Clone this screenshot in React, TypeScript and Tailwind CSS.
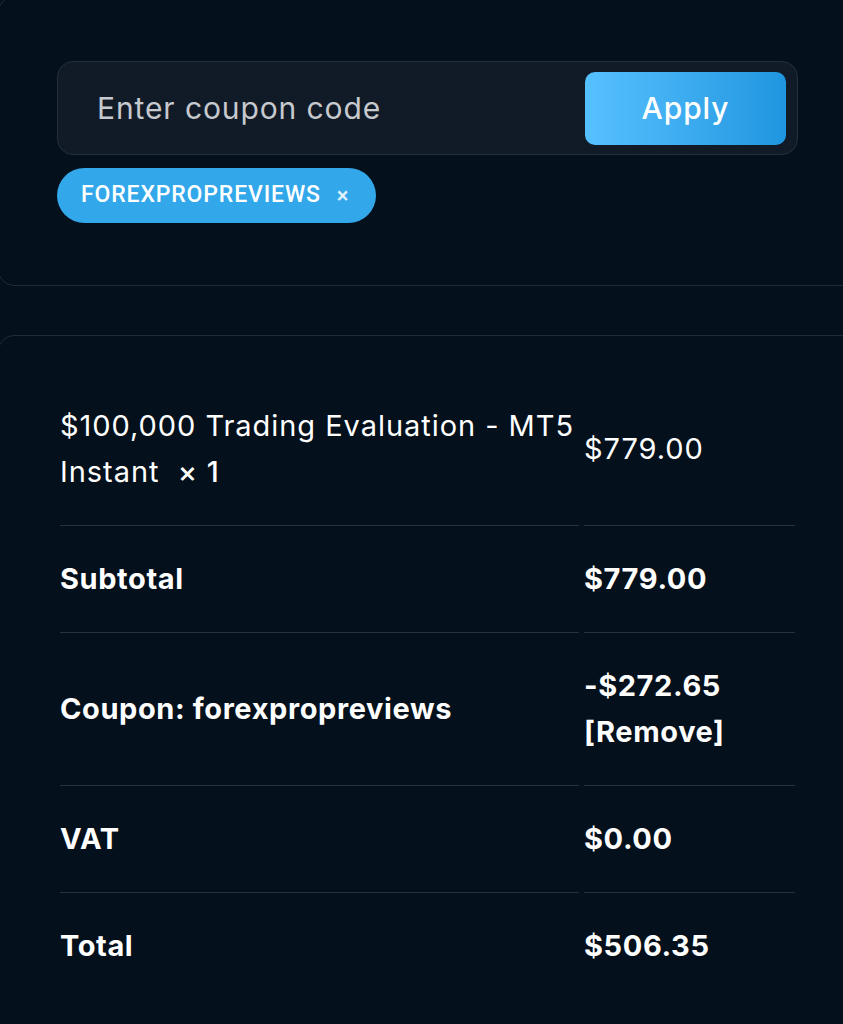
import React from 'react';

type Row = {
  label: React.ReactNode;
  value: React.ReactNode;
  bold?: boolean;
};

const rows: Row[] = [
  {
    label: (
      <>
        $100,000 Trading Evaluation - MT5 Instant&nbsp;&nbsp;<strong className="font-medium">×&nbsp;1</strong>
      </>
    ),
    value: '$779.00',
  },
  { label: 'Subtotal', value: '$779.00', bold: true },
  {
    label: 'Coupon: forexpropreviews',
    value: (
      <>
        -$272.65
        <br />
        <a href="#" className="text-white">[Remove]</a>
      </>
    ),
    bold: true,
  },
  { label: 'VAT', value: '$0.00', bold: true },
  { label: 'Total', value: '$506.35', bold: true },
];

function CouponCard() {
  return (
    <div className="rounded-[16px] border border-[#202b38] pl-[58px] pt-[64px] pb-[62px]">
      <div className="flex h-[94px] w-[741px] items-center justify-between rounded-[16px] border border-[#252f3b] bg-[#111b27] pl-[39px] pr-[11px]">
        <input
          type="text"
          placeholder="Enter coupon code"
          className="w-[440px] bg-transparent text-[30px] tracking-[0.9px] text-white outline-none placeholder:text-[#c6c9cd]"
        />
        <button className="h-[73px] w-[201px] rounded-[10px] bg-gradient-to-r from-[#56c1ff] to-[#1e96e0] text-[30px] font-medium tracking-[0.9px] text-white">
          Apply
        </button>
      </div>
      <div className="mt-[13px] flex">
        <span className="flex h-[55px] items-center gap-[16px] rounded-full bg-[#32a7ea] pl-[24px] pr-[27px] font-['Roboto',sans-serif] text-[23px] font-medium tracking-[0.85px] text-white">
          FOREXPROPREVIEWS
          <span className="text-[22px] text-white/85">×</span>
        </span>
      </div>
    </div>
  );
}

function TotalsCard() {
  return (
    <div className="mt-[49px] rounded-[16px] border border-[#202b38] pl-[61px] pt-[37px] pb-[40px]">
      <div className="grid grid-cols-[519px_211px] gap-x-[5px] text-[29px] leading-[46px] tracking-[0.95px] text-white">
        {rows.map((row, i) => {
          const last = i === rows.length - 1;
          const line = last ? '' : 'border-b border-[#28323f]';
          const weight = row.bold ? 'font-bold tracking-[0.6px]' : '';
          return (
            <React.Fragment key={i}>
              <div className={`flex items-center py-[30px] ${line} ${weight}`}>
                <div>{row.label}</div>
              </div>
              <div className={`flex items-center py-[30px] ${line} ${weight}`}>
                <div>{row.value}</div>
              </div>
            </React.Fragment>
          );
        })}
      </div>
    </div>
  );
}

export default function App() {
  return (
    <div className="min-h-screen w-full overflow-hidden bg-[#04101b] font-['Inter',sans-serif] antialiased">
      <div className="-ml-[2px] -mt-[4px] w-[900px]">
        <CouponCard />
        <TotalsCard />
      </div>
    </div>
  );
}
